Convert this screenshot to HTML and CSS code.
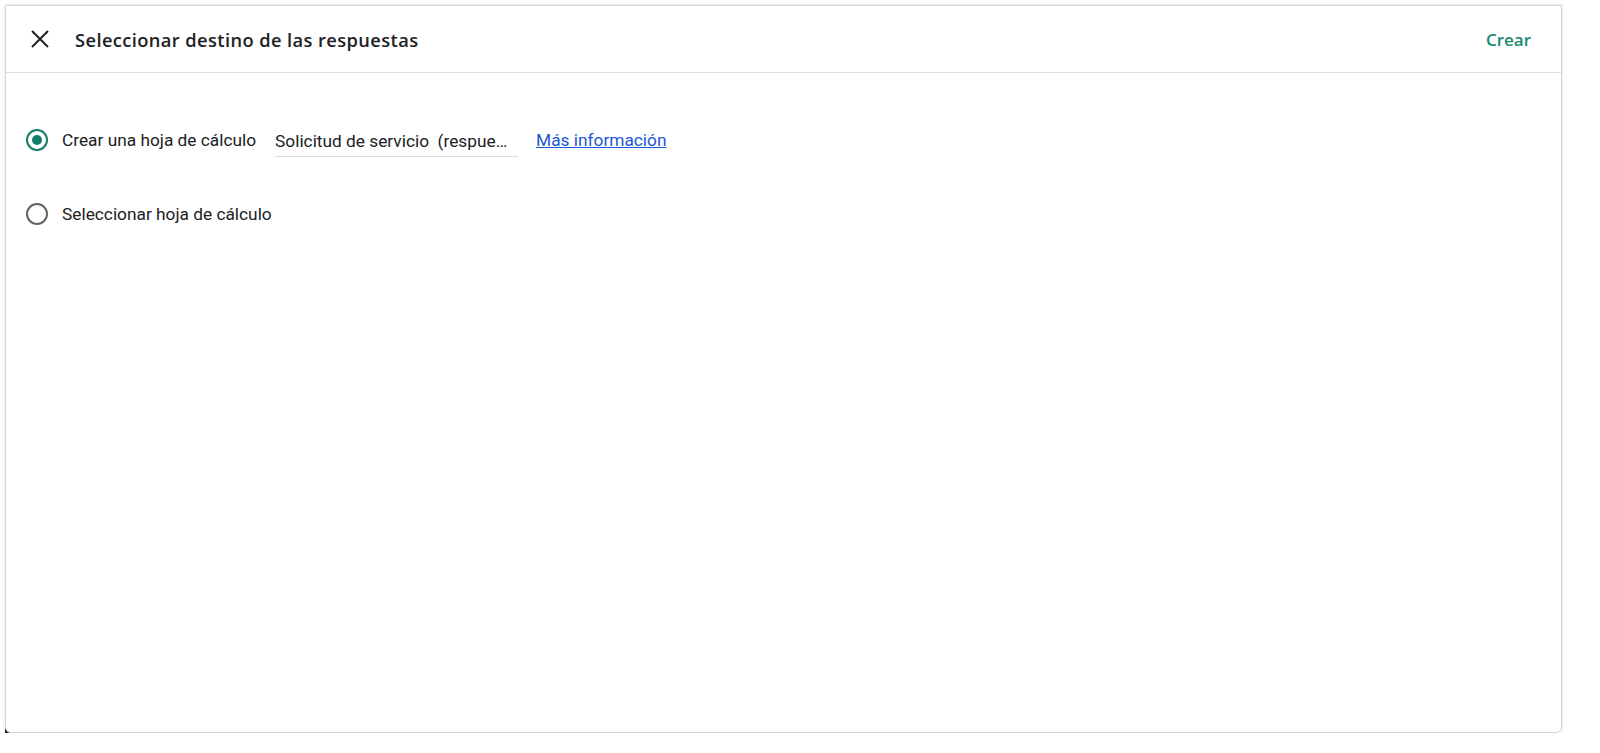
FILE: index.html
```html
<!DOCTYPE html>
<html lang="es">

<head>
    <meta charset="UTF-8">
    <meta name="viewport" content="width=device-width, initial-scale=1.0">
    <title>Seleccionar destino de las respuestas</title>
    <link rel="stylesheet" href="styles.css">
</head>

<body>
    <div class="dialog">
        <div class="header">
            <button class="close" aria-label="Cerrar">
                <svg width="24" height="24" viewBox="0 0 24 24">
                    <path d="M4 4L20 20M20 4L4 20" stroke="#202124" stroke-width="2" fill="none" />
                </svg>
            </button>
            <h1 class="title">Seleccionar destino de las respuestas</h1>
            <button class="create">Crear</button>
        </div>
        <div class="body">
            <div class="option">
                <span class="radio checked"></span>
                <span class="label">Crear una hoja de cálculo</span>
                <span class="name">Solicitud de servicio&nbsp; (respue…</span>
                <a class="more" href="#">Más información</a>
            </div>
            <div class="option">
                <span class="radio"></span>
                <span class="label">Seleccionar hoja de cálculo</span>
            </div>
        </div>
        <span class="corner"></span>
    </div>
</body>

</html>
```

FILE: styles.css
```css
body {
    margin: 0;
    background: #ffffff;
    font-family: Roboto, "Liberation Sans", sans-serif;
    color: #202124;
}

.dialog {
    margin: 5px 0 0 5px;
    width: 1557px;
    height: 728px;
    box-sizing: border-box;
    border: 1px solid #d6d6d6;
    border-radius: 0 0 6px 6px;
    box-shadow: 0 0 3px rgba(0, 0, 0, 0.15);
    background: #ffffff;
    position: relative;
}

.header {
    display: flex;
    align-items: center;
    height: 66px;
    border-bottom: 1px solid #dadce0;
    padding: 0 30px 0 22px;
}

.close {
    border: none;
    background: none;
    padding: 0;
    width: 24px;
    height: 24px;
    margin-right: 23px;
}

.title {
    flex: 1;
    margin: 0;
    font-family: "Open Sans", Roboto, sans-serif;
    font-size: 18.3px;
    font-weight: 600;
    letter-spacing: 0.4px;
}

.create {
    border: none;
    background: none;
    padding: 0;
    font-family: "Open Sans", Roboto, sans-serif;
    font-size: 17px;
    font-weight: 600;
    color: #188a70;
}

.body {
    padding: 48px 0 0 20px;
}

.option {
    display: flex;
    align-items: center;
    height: 38px;
    margin-bottom: 36px;
}

.radio {
    width: 18px;
    height: 18px;
    border: 2px solid #5f6368;
    border-radius: 50%;
    margin: 0 14px 0 0;
    position: relative;
}

.radio.checked {
    border-color: #137e67;
}

.radio.checked::after {
    content: '';
    position: absolute;
    left: 4px;
    top: 4px;
    width: 10px;
    height: 10px;
    border-radius: 50%;
    background: #137e67;
}

.label {
    font-size: 17.3px;
}

.name {
    margin-left: 19px;
    width: 243px;
    font-size: 17.3px;
    white-space: nowrap;
    border-bottom: 1px solid #dadce0;
    padding: 6px 0 5px;
    margin-top: 2px;
}

.more {
    margin-left: 18px;
    font-size: 17.3px;
    color: #1a57d6;
}

.corner {
    position: absolute;
    left: -1px;
    bottom: -1px;
    width: 6px;
    height: 6px;
    background: #1f2a26;
    z-index: -1;
}
```
